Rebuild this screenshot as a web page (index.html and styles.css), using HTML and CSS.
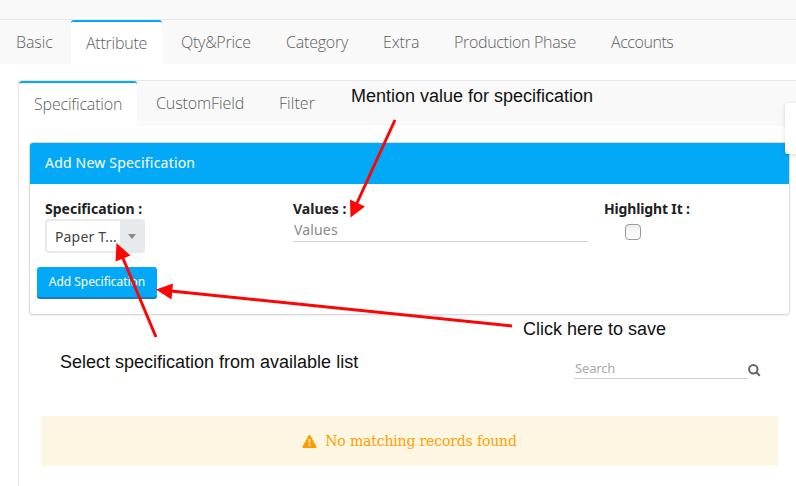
FILE: index.html
```html
<!DOCTYPE html>
<html lang="en">
<head>
<meta charset="utf-8">
<title>Product Attribute</title>
<link rel="stylesheet" href="styles.css">
</head>
<body>
<div class="page">
  <div class="topbar"></div>
  <nav class="tabs main-tabs">
    <a class="tab basic">Basic</a>
    <a class="tab active attribute">Attribute</a>
    <a class="tab qty">Qty&amp;Price</a>
    <a class="tab category">Category</a>
    <a class="tab extra">Extra</a>
    <a class="tab phase">Production Phase</a>
    <a class="tab accounts">Accounts</a>
  </nav>
  <section class="panel">
    <nav class="tabs sub-tabs">
      <a class="tab active specification">Specification</a>
      <a class="tab custom">CustomField</a>
      <a class="tab filter">Filter</a>
    </nav>
    <div class="card">
      <h2 class="card-title">Add New Specification</h2>
      <form class="card-body">
        <div class="fields">
          <div class="field">
            <label>Specification :</label>
            <div class="select"><span class="select-value">Paper T...</span><span class="select-arrow"><i></i></span></div>
          </div>
          <div class="field">
            <label>Values :</label>
            <input class="line-input" type="text" placeholder="Values">
          </div>
          <div class="field">
            <label class="highlight">Highlight It :</label>
            <span class="check"></span>
          </div>
        </div>
        <button class="add" type="button">Add Specification</button>
      </form>
    </div>
    <div class="search">
      <input class="search-input" type="text" placeholder="Search">
      <svg class="search-icon" width="13" height="13" viewBox="0 0 13 13"><circle cx="5.3" cy="5.2" r="4.2"/><path d="M8.4 8.3l3.4 3.4"/></svg>
    </div>
    <div class="empty">
      <svg width="15" height="13" viewBox="0 0 15 13"><path fill="#ff9b00" d="M7.500 0c.5 0 .8.2 1 .6l6 11c.4.7-.1 1.400-.9 1.400H1.400c-.8 0-1.300-.7-.9-1.400l6-11c.2-.4.5-.6 1-.6z"/><path fill="#fdf6e3" d="M6.500 4h2l-.25 4h-1.500zM6.600 9.200h1.800v1.800h-1.800z"/></svg>
      <span>No matching records found</span>
    </div>
  </section>
  <div class="side-handle"></div>
  <svg class="arrows" width="796" height="486" viewBox="0 0 796 486">
    <path d="M395 120L357 203M156 337L122 256M512 326L171 291"/>
    <path class="head" d="M350.500 217.500L350 199.500L365 206.500zM116.500 243L130.500 255.500L115.500 261.500zM156 289.500L173 283.500L171.500 299.500z"/>
  </svg>
  <div class="note note-value">Mention value for specification</div>
  <div class="note note-save">Click here to save</div>
  <div class="note note-select">Select specification from available list</div>
</div>
</body>
</html>
```
FILE: styles.css
```css
* { box-sizing: border-box; }
body { margin: 0; background: #fff; color: #212121; font: 14px/20px "Noto Sans", sans-serif; }
.page { position: relative; width: 796px; height: 486px; overflow: hidden; }
.topbar { height: 20px; background: #f9f9f9; border-bottom: 1px solid #e7e9eb; }
.tabs { display: flex; background: #f9f9f9; }
.tab { padding: 0 15px; font: 300 16px/44px "Open Sans", sans-serif; letter-spacing: -.25px; color: #606060; white-space: nowrap; flex: none; }
.tab.active { background: #fff; border-top: 2px solid #03a9f4; border-radius: 3px 3px 0 0; line-height: 42px; }
.main-tabs { height: 44px; padding-left: 1px; }
.basic { width: 70px; letter-spacing: -.1px; }
.attribute { width: 91px; margin-right: 4px; }
.qty { width: 105px; }
.category { width: 97px; letter-spacing: -.2px; }
.extra { width: 71px; letter-spacing: -.1px; }
.phase { width: 157px; letter-spacing: -.32px; }
.accounts { letter-spacing: -.45px; }
.panel { margin: 16px 0 0 18px; height: 406px; border: solid #e4e7ea; border-width: 1px 0 0 1px; border-top-left-radius: 3px; }
.sub-tabs { height: 45px; }
.specification { width: 118px; margin-right: 4px; letter-spacing: -.18px; }
.custom { width: 123px; letter-spacing: -.1px; }
.filter { letter-spacing: .05px; }
.card { width: 761px; height: 173px; margin: 16px 0 0 10px; border: 1px solid #d8dadb; border-radius: 4px; box-shadow: 0 1px 2px rgba(0,0,0,.08); overflow: hidden; }
.card-title { margin: 0; height: 41px; padding-left: 15px; background: #03a9f7; color: #fff; font: 400 14px/40px "Noto Sans", sans-serif; letter-spacing: .2px; }
.card-body { padding: 15px 7px 0; }
.fields { display: grid; grid-template-columns: 248px 311px 1fr; padding-left: 8px; height: 68px; }
label { display: block; height: 20px; font-weight: 700; line-height: 19px; }
.highlight { letter-spacing: -.15px; }
.select { display: flex; width: 100px; height: 34px; border: 2px solid #e6eaed; border-radius: 4px; background: #fff; }
.select-value { width: 73px; padding-left: 8px; line-height: 31px; letter-spacing: .15px; color: #444; }
.select-arrow { flex: 1; display: flex; align-items: center; justify-content: center; background: #e6eaed; }
.select-arrow i { border: 4px solid transparent; border-top: 5px solid #888; border-bottom: 0; }
input { display: block; padding: 0 1px; border: 0; border-bottom: 1px solid #d2d2d2; outline: 0; background: transparent; font: 14px "Noto Sans", sans-serif; }
.line-input { width: 295px; height: 23px; padding-bottom: 2px; letter-spacing: .15px; }
.line-input::placeholder { color: #888; }
.check { display: block; width: 16px; height: 16px; margin: 5px 0 0 21px; border: 1px solid #999; border-radius: 4px; background: linear-gradient(#eee, #fff); }
.add { display: block; width: 120px; height: 32px; padding: 0 0 2px; border: 0; border-bottom: 2px solid #167fb9; border-radius: 3px; background: #03a9f7; color: #fff; font: 12px "Noto Sans", sans-serif; letter-spacing: -.04px; }
.search { display: flex; margin: 43px 0 0 555px; }
.search-input { width: 174px; height: 21px; font-size: 13px; letter-spacing: -.15px; }
.search-input::placeholder { color: #aaa; }
.search-icon { margin: 6px 0 -6px; fill: none; stroke: #666; stroke-width: 2; }
.empty { width: 737px; height: 50px; margin: 37px 0 0 22px; display: flex; align-items: center; justify-content: center; gap: 8px; background: #fdf6e3; color: #ffa000; font: 14px "DejaVu Serif", serif; letter-spacing: -.15px; }
.side-handle { position: absolute; left: 785px; top: 103px; width: 20px; height: 51px; background: #fff; border-radius: 3px; box-shadow: 0 1px 4px rgba(0,0,0,.16); }
.arrows { position: absolute; left: 0; top: 0; fill: none; stroke: #fd0505; stroke-width: 3; }
.arrows .head { fill: #fd0505; stroke: none; }
.note { position: absolute; color: #111; font: 18px/20px "Liberation Sans", Arial, sans-serif; white-space: nowrap; }
.note-value { left: 351px; top: 86px; }
.note-save { left: 523px; top: 319px; }
.note-select { left: 60px; top: 352px; }
```
